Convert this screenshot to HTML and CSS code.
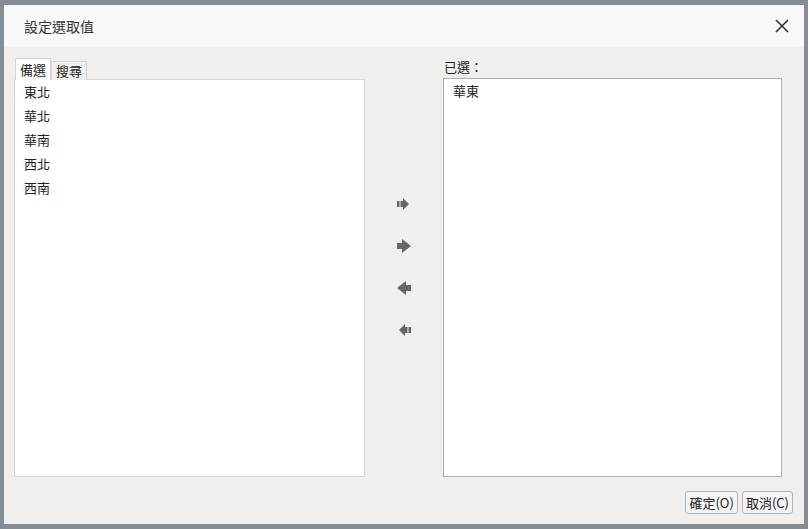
FILE: index.html
```html
<!DOCTYPE html>
<html lang="zh-Hant">
<head>
    <meta charset="UTF-8">
    <title>設定選取值</title>
    <link rel="stylesheet" href="styles.css">
</head>
<body>
    <div class="dialog">
        <div class="dialog-header">
            <span class="dialog-title">設定選取值</span>
            <button class="close-btn" title="關閉">
                <svg width="14" height="14" viewBox="0 0 14 14"><path d="M1 1L13 13M13 1L1 13" stroke="#333" stroke-width="1.6"/></svg>
            </button>
        </div>
        <div class="dialog-body">
            <div class="picker">
                <div class="panel">
                    <div class="tabs">
                        <span class="tab active">備選</span>
                        <span class="tab">搜尋</span>
                    </div>
                    <ul class="list source" id="source"></ul>
                </div>
                <div class="moves">
                    <button class="move" onclick="moveAll('source', 'target')">
                        <svg width="14" height="12" viewBox="0 0 14 12"><path d="M0 3h2.5v6H0zM3.5 3H6v6H3.5zM6 0l6 6-6 6z" fill="#666"/></svg>
                    </button>
                    <button class="move" onclick="moveOne('source', 'target')">
                        <svg width="14" height="14" viewBox="0 0 14 14"><path d="M0 4h5V0l9 7-9 7v-4H0z" fill="#666"/></svg>
                    </button>
                    <button class="move" onclick="moveOne('target', 'source')">
                        <svg width="14" height="14" viewBox="0 0 14 14"><path d="M14 4H9V0L0 7l9 7v-4h5z" fill="#666"/></svg>
                    </button>
                    <button class="move" onclick="moveAll('target', 'source')">
                        <svg width="14" height="12" viewBox="0 0 14 12"><path d="M14 3h-2.5v6H14zM10.5 3H8v6h2.5zM8 0L2 6l6 6z" fill="#666"/></svg>
                    </button>
                </div>
                <div class="panel">
                    <div class="label">已選：</div>
                    <ul class="list target" id="target"></ul>
                </div>
            </div>
        </div>
        <div class="dialog-footer">
            <button class="btn">確定(O)</button>
            <button class="btn">取消(C)</button>
        </div>
    </div>
    <script>
        const lists = {
            source: ["東北", "華北", "華南", "西北", "西南"],
            target: ["華東"]
        };
        let picked = null;

        function render() {
            Object.keys(lists).forEach(name => {
                const ul = document.getElementById(name);
                ul.innerHTML = "";
                lists[name].forEach(item => {
                    const li = document.createElement("li");
                    li.textContent = item;
                    if (picked === item) li.classList.add("picked");
                    li.addEventListener("click", () => { picked = item; render(); });
                    ul.appendChild(li);
                });
            });
        }

        function moveOne(from, to) {
            const i = lists[from].indexOf(picked);
            if (i < 0) return;
            lists[from].splice(i, 1);
            lists[to].push(picked);
            render();
        }

        function moveAll(from, to) {
            lists[to] = lists[to].concat(lists[from]);
            lists[from] = [];
            render();
        }

        render();
    </script>
</body>
</html>
```

FILE: styles.css
```css
html, body {
    margin: 0;
    height: 100%;
}
body {
    background: #858c93;
    font-family: "Noto Sans CJK TC", "Noto Sans", sans-serif;
    font-size: 13px;
    color: #222;
    padding: 5px 4px 0 4px;
    box-sizing: border-box;
    overflow: hidden;
}
.dialog {
    width: 800px;
    height: 519px;
    background: #f0efed;
    display: flex;
    flex-direction: column;
}
.dialog-header {
    height: 42px;
    background: #f8f8f8;
    display: flex;
    align-items: center;
    justify-content: space-between;
    padding: 0 14px 0 20px;
}
.dialog-title {
    font-size: 14px;
    color: #333;
}
.close-btn {
    background: none;
    border: none;
    padding: 0;
    width: 16px;
    height: 16px;
    display: flex;
    align-items: center;
    justify-content: center;
    cursor: pointer;
}
.dialog-body {
    flex: 1;
    padding: 11px 0 0 10px;
}
.picker {
    display: grid;
    grid-template-columns: 351px 78px 339px;
}
.panel {
    display: flex;
    flex-direction: column;
}
.tabs {
    display: flex;
    align-items: flex-end;
    height: 21px;
    padding-left: 1px;
}
.tab {
    height: 18px;
    line-height: 18px;
    padding: 0 4px;
    border: 1px solid #d4d4d4;
    border-bottom: none;
    background: #f0efed;
    margin-bottom: -1px;
    position: relative;
}
.tab.active {
    height: 21px;
    line-height: 22px;
    background: #fff;
    z-index: 1;
}
.label {
    height: 20px;
    line-height: 18px;
    padding-left: 1px;
}
.list {
    list-style: none;
    margin: 0;
    padding: 0;
    background: #fff;
    border: 1px solid #d4d4d4;
    height: 398px;
    box-sizing: border-box;
}
.list.target {
    border-color: #b0b0b0;
    height: 399px;
}
.list li {
    height: 24px;
    line-height: 24px;
    padding-left: 9px;
    cursor: default;
}
.list li.picked {
    background: #dce8f5;
}
.moves {
    display: flex;
    flex-direction: column;
    align-items: center;
    padding-top: 135px;
    gap: 20px;
}
.move {
    width: 22px;
    height: 22px;
    padding: 0;
    border: none;
    background: none;
    display: flex;
    align-items: center;
    justify-content: center;
    cursor: pointer;
}
.dialog-footer {
    display: flex;
    justify-content: flex-end;
    gap: 4px;
    padding: 0 11px 10px 0;
}
.btn {
    height: 23px;
    padding: 0 3px;
    font-family: "Noto Sans CJK TC", "Noto Sans", sans-serif;
    font-size: 13px;
    color: #222;
    background: #f4f4f4;
    border: 1px solid #a9b4c2;
    border-radius: 3px;
    cursor: pointer;
}
```
